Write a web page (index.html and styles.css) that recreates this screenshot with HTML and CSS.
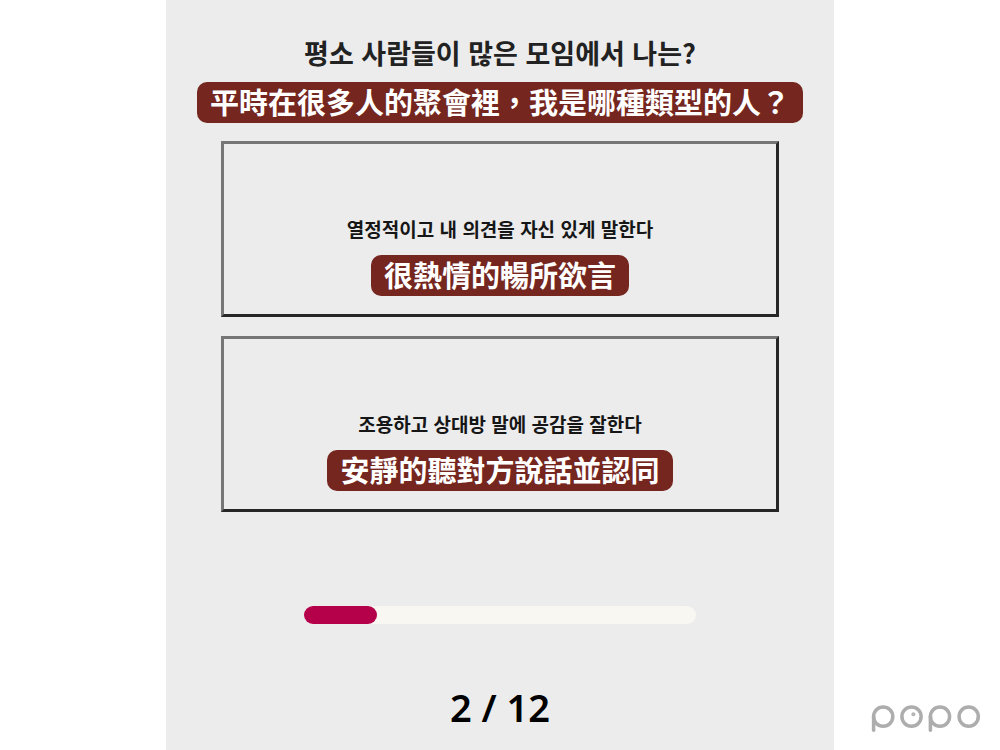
FILE: index.html
```html
<!DOCTYPE html>
<html lang="ko">
<head>
<meta charset="utf-8">
<meta name="viewport" content="width=device-width, initial-scale=1">
<title>2 / 12</title>
<link rel="stylesheet" href="styles.css">
</head>
<body>
<main class="quiz">
  <h1 class="question">평소 사람들이 많은 모임에서 나는?</h1>
  <p class="caption" lang="zh-Hant">平時在很多人的聚會裡，我是哪種類型的人？</p>
  <div class="options">
    <button class="option" type="button">
      <span class="answer">열정적이고 내 의견을 자신 있게 말한다</span>
      <span class="caption" lang="zh-Hant">很熱情的暢所欲言</span>
    </button>
    <button class="option" type="button">
      <span class="answer">조용하고 상대방 말에 공감을 잘한다</span>
      <span class="caption" lang="zh-Hant">安靜的聽對方說話並認同</span>
    </button>
  </div>
  <div class="progress" role="progressbar" aria-label="2 / 12" aria-valuemin="0" aria-valuemax="12" aria-valuenow="2">
    <div class="progress-fill" style="width: 18.5%"></div>
  </div>
  <p class="count">2 / 12</p>
</main>
<svg class="logo" width="110" height="30" viewBox="0 0 110 30" role="img" aria-label="popo">
  <g fill="none" stroke="#adadad" stroke-width="3.5">
    <circle cx="12.2" cy="12.6" r="9.6"/>
    <path d="M2.6 12.6V26.3" stroke-linecap="round"/>
    <circle cx="40.5" cy="12.6" r="9.6"/>
    <circle cx="69" cy="12.6" r="9.6"/>
    <path d="M59.4 12.6V26.3" stroke-linecap="round"/>
    <circle cx="97.7" cy="12.6" r="9.6"/>
  </g>
  <circle cx="42.4" cy="10.2" r="2" fill="#b5b5b5"/>
</svg>
</body>
</html>
```
FILE: styles.css
```css
* {
  box-sizing: border-box;
}

body {
  margin: 0;
  background: #fff;
  color: #222;
  font-family: "Noto Sans CJK KR", "Noto Sans", sans-serif;
}

.quiz {
  display: flex;
  flex-direction: column;
  align-items: center;
  width: 66.8%;
  min-height: 100vh;
  margin: 0 auto;
  padding: 33px 0 20px;
  background: #ececec;
}

.question {
  margin: 0 0 9px;
  font-size: 27px;
  line-height: 40px;
  font-weight: 700;
}

.caption {
  margin: 0;
  padding: 0 13px 3px;
  border-radius: 10px;
  background: #74261f;
  color: #fff;
  font-family: "Noto Sans CJK TC", sans-serif;
  font-size: 29px;
  line-height: 38px;
  font-weight: 700;
}

.options {
  display: grid;
  gap: 19px;
  width: 83.6%;
  margin-top: 18px;
}

.option {
  display: flex;
  flex-direction: column;
  align-items: center;
  gap: 12px;
  padding: 70px 0 18px;
  border: 3px solid;
  border-color: #767676 #262626 #262626 #767676;
  background: transparent;
  color: #161616;
  font-family: inherit;
}

.answer {
  font-size: 19px;
  line-height: 29px;
  font-weight: 700;
}

.progress {
  width: 58.6%;
  height: 18px;
  margin-top: 94px;
  border-radius: 9px;
  background: #f9f7f1;
}

.progress-fill {
  height: 100%;
  border-radius: 9px;
  background: #b5004a;
}

.count {
  margin: 58px 0 0;
  color: #000;
  font-family: "Noto Sans", sans-serif;
  font-size: 38px;
  line-height: 50px;
  font-weight: 600;
}

.logo {
  position: fixed;
  right: 19px;
  bottom: 16px;
}
```
